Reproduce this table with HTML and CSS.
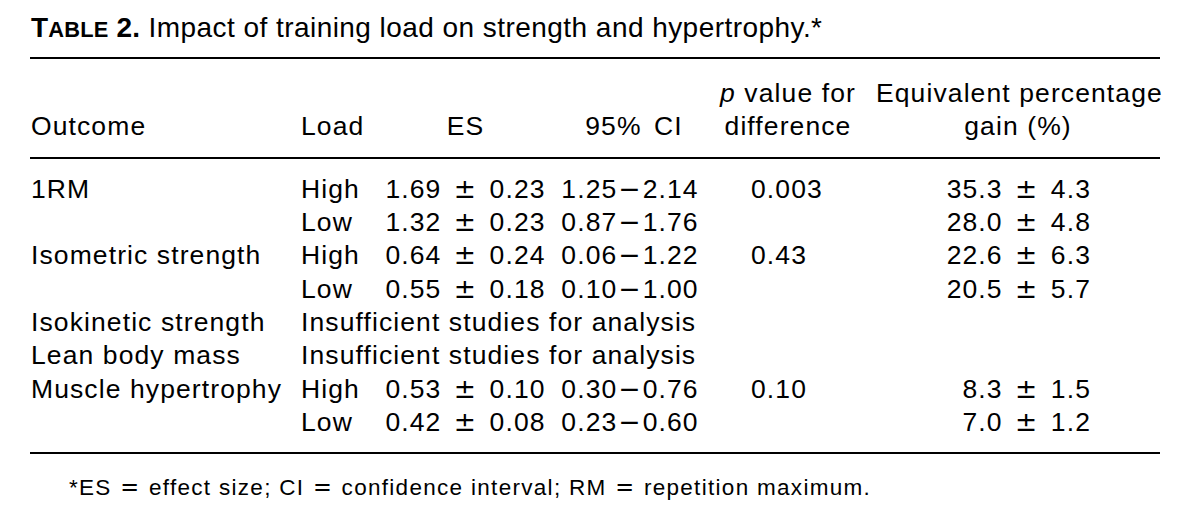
FILE: index.html
```html
<!DOCTYPE html>
<html lang="en">
<head>
<meta charset="utf-8">
<title>Table 2</title>
<link rel="stylesheet" href="styles.css">
</head>
<body>
<div class="page">
  <h1 class="caption"><span class="label">T<span class="sc">ABLE</span> 2.</span> Impact of training load on strength and hypertrophy.*</h1>
  <div class="table">
    <div class="grid head">
      <div class="cell c1">Outcome</div>
      <div class="cell c2">Load</div>
      <div class="cell c3">ES</div>
      <div class="cell c4">95% CI</div>
      <div class="cell c5"><i>p</i> value for<br>difference</div>
      <div class="cell c6">Equivalent percentage<br>gain (%)</div>
    </div>
    <div class="grid body">
      <div class="cell c1">1RM</div>
      <div class="cell c2">High</div>
      <div class="cell c3">1.69 <span class="op">±</span> 0.23</div>
      <div class="cell c4">1.25<span class="op">−</span>2.14</div>
      <div class="cell c5 v">0.003</div>
      <div class="cell c6 v">35.3 <span class="op">±</span> 4.3</div>

      <div class="cell c1"></div>
      <div class="cell c2">Low</div>
      <div class="cell c3">1.32 <span class="op">±</span> 0.23</div>
      <div class="cell c4">0.87<span class="op">−</span>1.76</div>
      <div class="cell c5 v"></div>
      <div class="cell c6 v">28.0 <span class="op">±</span> 4.8</div>

      <div class="cell c1">Isometric strength</div>
      <div class="cell c2">High</div>
      <div class="cell c3">0.64 <span class="op">±</span> 0.24</div>
      <div class="cell c4">0.06<span class="op">−</span>1.22</div>
      <div class="cell c5 v">0.43</div>
      <div class="cell c6 v">22.6 <span class="op">±</span> 6.3</div>

      <div class="cell c1"></div>
      <div class="cell c2">Low</div>
      <div class="cell c3">0.55 <span class="op">±</span> 0.18</div>
      <div class="cell c4">0.10<span class="op">−</span>1.00</div>
      <div class="cell c5 v"></div>
      <div class="cell c6 v">20.5 <span class="op">±</span> 5.7</div>

      <div class="cell c1">Isokinetic strength</div>
      <div class="cell span">Insufficient studies for analysis</div>

      <div class="cell c1">Lean body mass</div>
      <div class="cell span">Insufficient studies for analysis</div>

      <div class="cell c1">Muscle hypertrophy</div>
      <div class="cell c2">High</div>
      <div class="cell c3">0.53 <span class="op">±</span> 0.10</div>
      <div class="cell c4">0.30<span class="op">−</span>0.76</div>
      <div class="cell c5 v">0.10</div>
      <div class="cell c6 v">8.3 <span class="op">±</span> 1.5</div>

      <div class="cell c1"></div>
      <div class="cell c2">Low</div>
      <div class="cell c3">0.42 <span class="op">±</span> 0.08</div>
      <div class="cell c4">0.23<span class="op">−</span>0.60</div>
      <div class="cell c5 v"></div>
      <div class="cell c6 v">7.0 <span class="op">±</span> 1.2</div>
    </div>
  </div>
  <p class="note">*ES <span class="op">=</span> effect size; CI <span class="op">=</span> confidence interval; RM <span class="op">=</span> repetition maximum.</p>
</div>
</body>
</html>
```

FILE: styles.css
```css
html, body {
  margin: 0;
  padding: 0;
  background: #ffffff;
  color: #000000;
  font-family: "Liberation Sans", Arial, Helvetica, sans-serif;
}

.page {
  width: 1130px;
  padding: 12px 0 0 30px;
}

.caption {
  margin: 0;
  padding-left: 1px;
  height: 32px;
  font-size: 28px;
  line-height: 32px;
  font-weight: 400;
  letter-spacing: 0.45px;
  white-space: nowrap;
}

.caption .label {
  font-weight: 700;
  letter-spacing: 0.2px;
}

.caption .sc {
  font-size: 0.78em;
  line-height: 1;
}

.table {
  margin-top: 13px;
  border-top: 2px solid #000;
  border-bottom: 2px solid #000;
}

.grid {
  display: grid;
  grid-template-columns: 271px 70px 189px 140px 176px 284px;
  font-size: 26.5px;
  line-height: 33.33px;
  letter-spacing: 1.1px;
  white-space: nowrap;
}

.head {
  grid-auto-rows: 66.67px;
  padding: 18px 0 13px;
  border-bottom: 2px solid #000;
}

.head .cell {
  align-self: end;
}

.body {
  grid-auto-rows: 33.33px;
  padding: 14px 0 13px;
}

.cell {
  overflow: visible;
}

.c1 {
  padding-left: 1px;
}

.c3,
.c4 {
  text-align: center;
}

.head .c4 {
  padding-left: 8px;
  word-spacing: 4px;
}

.head .c5,
.head .c6 {
  text-align: center;
}

.body .c5 {
  padding-left: 51px;
}

.body .c6 {
  text-align: right;
  padding-right: 69px;
}

.span {
  grid-column: 2 / -1;
}

.op {
  font-family: "DejaVu Sans", sans-serif;
  line-height: 1;
  margin: 0 4px;
}

.c4 .op {
  margin: 0 1px;
}

.note {
  margin: 19px 0 0;
  padding-left: 39px;
  font-size: 22.5px;
  line-height: 30px;
  letter-spacing: 1.3px;
  white-space: nowrap;
}

.note .op {
  margin: 0 1px;
}
```
